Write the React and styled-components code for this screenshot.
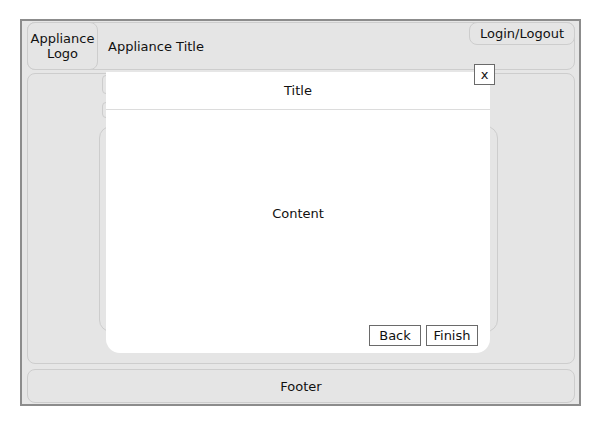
import React from "react";
import styled, { createGlobalStyle } from "styled-components";

const Global = createGlobalStyle`
  body {
    margin: 0;
    background: #ffffff;
    font-family: "DejaVu Sans", Verdana, sans-serif;
    font-size: 13px;
    color: #111;
  }
`;

const Frame = styled.div`
  position: relative;
  box-sizing: border-box;
  margin: 19px 0 0 20px;
  width: 561px;
  height: 387px;
  padding: 1px 4px 0 5px;
  border: 2px solid #8c8c8c;
  background: #e6e6e6;
  display: flex;
  flex-direction: column;
`;

const Panel = styled.div`
  box-sizing: border-box;
  border: 1px solid #cdcdcd;
  border-radius: 8px;
  background: #e5e5e5;
`;

const Header = styled(Panel)`
  height: 48px;
  display: flex;
  align-items: stretch;
  position: relative;
`;

const Logo = styled(Panel)`
  width: 71px;
  margin: -1px 0 -1px -1px;
  display: flex;
  align-items: center;
  justify-content: center;
  text-align: center;
  line-height: 15px;
`;

const AppTitle = styled.div`
  display: flex;
  align-items: center;
  padding-left: 10px;
  flex: 1;
`;

const LoginButton = styled(Panel)`
  align-self: flex-start;
  width: 106px;
  height: 23px;
  margin: -1px -1px 0 0;
  display: flex;
  align-items: center;
  justify-content: center;
`;

const Main = styled(Panel)`
  margin-top: 3px;
  height: 291px;
  display: flex;
  flex-direction: column;
  align-items: flex-start;
  padding: 1px 0 0 71px;
  gap: 8px;
`;

const Field = styled(Panel)`
  margin-left: 3px;
  width: 300px;
  height: ${(p) => p.$h}px;
  border-radius: 4px;
`;

const InnerPanel = styled(Panel)`
  width: 399px;
  height: 206px;
  border-radius: 12px;
`;

const Footer = styled(Panel)`
  margin-top: 5px;
  height: 34px;
  display: flex;
  align-items: center;
  justify-content: center;
`;

const Modal = styled.div`
  position: absolute;
  left: 84px;
  top: 51px;
  width: 384px;
  height: 281px;
  background: #ffffff;
  border-radius: 0 0 14px 14px;
  display: flex;
  flex-direction: column;
`;

const ModalTitle = styled.div`
  height: 37px;
  border-bottom: 1px solid #dcdcdc;
  display: flex;
  align-items: center;
  justify-content: center;
`;

const ModalContent = styled.div`
  flex: 1;
  display: flex;
  align-items: center;
  justify-content: center;
  padding-bottom: 9px;
`;

const Actions = styled.div`
  display: flex;
  justify-content: flex-end;
  gap: 5px;
  padding: 0 12px 7px 0;
`;

const Button = styled.button`
  box-sizing: border-box;
  width: 52px;
  height: 21px;
  padding: 0;
  border: 1px solid #6a6a6a;
  background: #ffffff;
  font: inherit;
  color: #111;
`;

const Close = styled(Button)`
  position: absolute;
  right: -5px;
  top: -8px;
  width: 21px;
  height: 21px;
  line-height: 17px;
`;

export default function App() {
  return (
    <>
      <Global />
      <Frame>
        <Header>
          <Logo>
            Appliance
            <br />
            Logo
          </Logo>
          <AppTitle>Appliance Title</AppTitle>
          <LoginButton>Login/Logout</LoginButton>
        </Header>
        <Main>
          <Field $h={19} />
          <Field $h={16} />
          <InnerPanel />
        </Main>
        <Footer>Footer</Footer>
        <Modal>
          <Close>x</Close>
          <ModalTitle>Title</ModalTitle>
          <ModalContent>Content</ModalContent>
          <Actions>
            <Button>Back</Button>
            <Button>Finish</Button>
          </Actions>
        </Modal>
      </Frame>
    </>
  );
}
